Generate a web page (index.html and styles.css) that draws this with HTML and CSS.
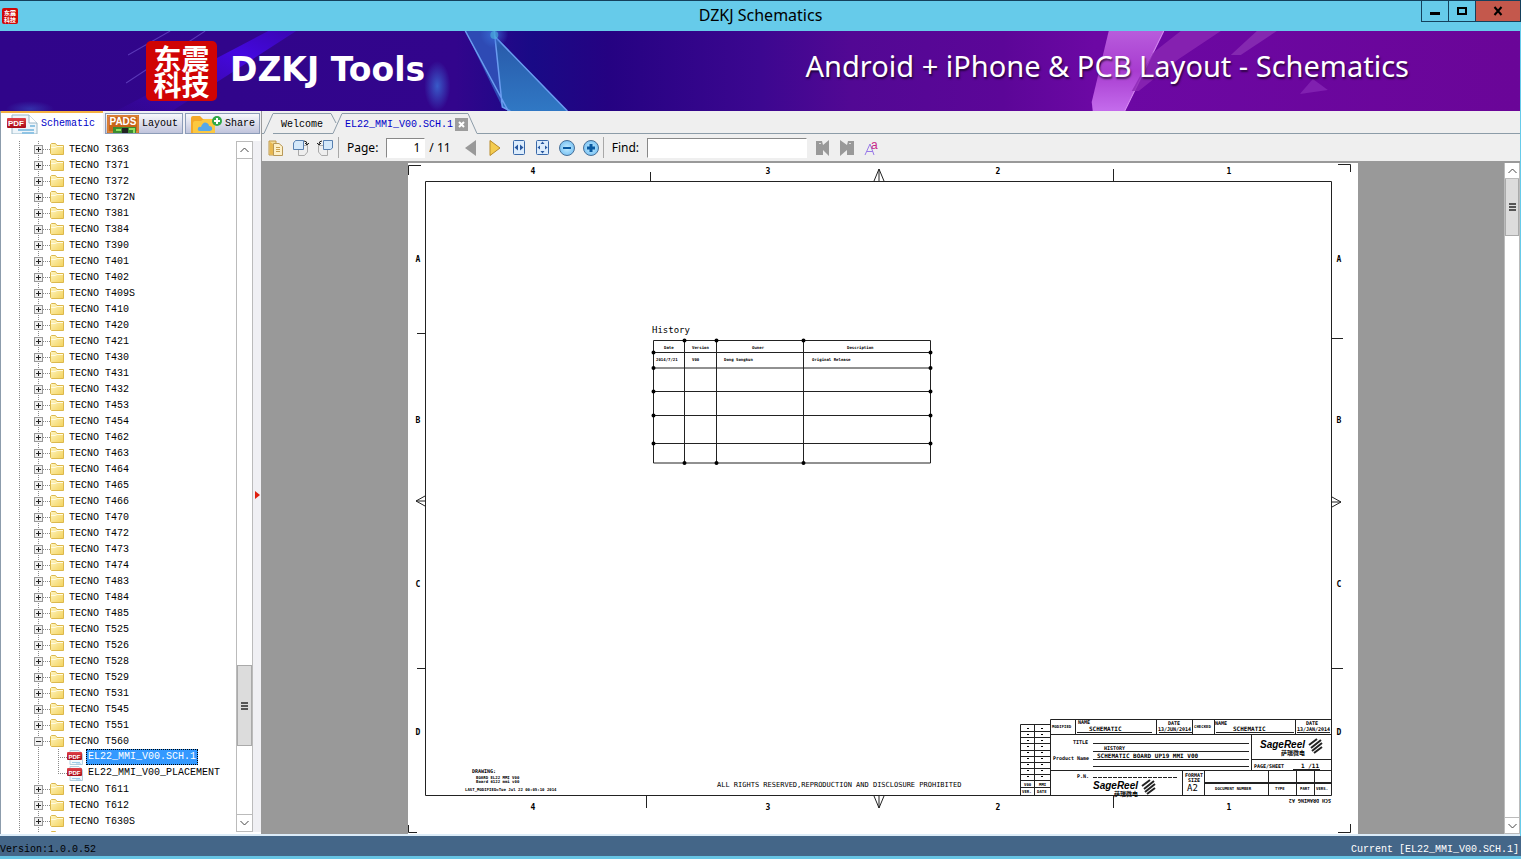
FILE: index.html
```html
<!DOCTYPE html>
<html lang="en">
<head>
    <meta charset="UTF-8">
    <meta name="viewport" content="width=device-width, initial-scale=1.0">
    <title>DZKJ Schematics</title>
    <link rel="stylesheet" href="styles.css">
</head>
<body>

    <!-- Shared icons -->
    <svg class="sprite" aria-hidden="true">
        <defs>
            <linearGradient id="folderFill" x1="0" y1="0" x2="1" y2="1">
                <stop offset="0" stop-color="#fff6c4"/>
                <stop offset="1" stop-color="#f3d25c"/>
            </linearGradient>
            <linearGradient id="pdfRed" x1="0" y1="0" x2="0" y2="1">
                <stop offset="0" stop-color="#e04048"/>
                <stop offset="1" stop-color="#a80c18"/>
            </linearGradient>
            <radialGradient id="zoomFill">
                <stop offset="0" stop-color="#c4ecff"/>
                <stop offset="1" stop-color="#7cc4f4"/>
            </radialGradient>
        </defs>
        <symbol id="folder" viewBox="0 0 14 12">
            <path d="M.5 10.500V1.500L1.500.5H5.500L7 2.500H13.500V11.500H1.500Z" fill="url(#folderFill)" stroke="#dcb84c"/>
            <path d="M1 4.500H5L7 3.500H13" stroke="#fffbe0" fill="none"/>
        </symbol>
        <symbol id="pdf" viewBox="0 0 16 15">
            <path d="M3 .5H12L15.500 4V14.500H3Z" fill="#f2f8fc" stroke="#b4cede"/>
            <path d="M5 12.500H13M9 14H14" stroke="#9ccbe8"/>
            <rect x="0" y="2" width="15" height="8" rx="1" fill="url(#pdfRed)"/>
            <text x="7.500" y="8.500" font-size="6" font-weight="bold" text-anchor="middle" fill="#fff">PDF</text>
        </symbol>
    </svg>

    <header class="titlebar">
        <span class="app-icon" lang="zh">东震<br>科技</span>
        <h1>DZKJ Schematics</h1>
        <div class="window-buttons">
            <button aria-label="Minimize"><svg width="12" height="12"><rect x="1" y="7" width="10" height="3"/></svg></button>
            <button aria-label="Maximize"><svg width="12" height="12"><path d="M2 3H10V9H2Z" fill="none" stroke="#000" stroke-width="2"/></svg></button>
            <button class="close" aria-label="Close"><svg width="12" height="12"><path d="M2.500 2L9.500 10M9.500 2L2.500 10" stroke="#000" stroke-width="2"/></svg></button>
        </div>
    </header>

    <section class="banner">
        <svg class="banner-art" viewBox="0 0 1519 80" preserveAspectRatio="none" aria-hidden="true">
            <defs>
                <linearGradient id="bannerFill">
                    <stop offset="0" stop-color="#30058a"/>
                    <stop offset=".3" stop-color="#32058c"/>
                    <stop offset=".35" stop-color="#190a86"/>
                    <stop offset=".4" stop-color="#250282"/>
                    <stop offset=".5" stop-color="#3c0790"/>
                    <stop offset=".56" stop-color="#520894"/>
                    <stop offset=".66" stop-color="#5c0698"/>
                    <stop offset=".72" stop-color="#6c08a4"/>
                    <stop offset="1" stop-color="#6a0598"/>
                </linearGradient>
                <linearGradient id="beam" x1="0" y1="1" x2="1" y2="0">
                    <stop offset="0" stop-color="#4008b8" stop-opacity=".1"/>
                    <stop offset=".7" stop-color="#4408e0"/>
                    <stop offset="1" stop-color="#3a06b0"/>
                </linearGradient>
                <linearGradient id="shardBlue" x1="0" y1="0" x2="0" y2="1">
                    <stop offset="0" stop-color="#2858a8"/>
                    <stop offset="1" stop-color="#3078c4"/>
                </linearGradient>
                <linearGradient id="shardPink" x1="0" y1="0" x2="0" y2="1">
                    <stop offset="0" stop-color="#b85cdc"/>
                    <stop offset=".5" stop-color="#a83cd0"/>
                    <stop offset="1" stop-color="#c46cec"/>
                </linearGradient>
                <radialGradient id="glow">
                    <stop offset="0" stop-color="#3a70d8" stop-opacity=".8"/>
                    <stop offset="1" stop-color="#3a70d8" stop-opacity="0"/>
                </radialGradient>
            </defs>
            <rect width="1519" height="80" fill="url(#bannerFill)"/>
            <path d="M268 0H296L172 80H116Z" fill="url(#beam)"/>
            <path d="M205 0L126 52M170 0L128 24" stroke="#5a38b8" stroke-width="1"/>
            <ellipse cx="437" cy="55" rx="13" ry="25" fill="url(#glow)"/>
            <ellipse cx="30" cy="78" rx="24" ry="8" fill="url(#glow)" opacity=".5"/>
            <path d="M465 0H494L502 76Z" fill="#2e4ab4"/>
            <path d="M494 4L567 80H508L502 76Z" fill="url(#shardBlue)"/>
            <path d="M465 0L508 80M494 0L502 76L510 80M494 5L567 80" stroke="#6a9cf0" stroke-width="1.500" fill="none"/>
            <circle cx="494" cy="3" r="14" fill="url(#glow)"/>
            <circle cx="494" cy="4" r="4" fill="#50c8e0" opacity=".5"/>
            <path d="M1108 0H1163L1124 80H1092L1091 71Z" fill="url(#shardPink)"/>
            <path d="M1163 0L1124 80" stroke="#d88cf4"/>
            <path d="M1180 0H1220L1178 28L1138 60H1131L1152 22Z" fill="#8c28b4" opacity=".8"/>
            <path d="M1256 0H1276L1240 24H1230Z" fill="#8428b0"/>
            <path d="M1312 48L1327 59L1299 63Z" fill="#8020b0"/>
        </svg>
        <div class="brand">
            <span class="brand-logo" lang="zh"><span>东震</span><span>科技</span></span>
            <span class="brand-name">DZKJ Tools</span>
        </div>
        <p class="slogan">Android + iPhone &amp; PCB Layout - Schematics</p>
    </section>

    <div class="workspace">
        <!-- Left panel -->
        <aside class="sidebar">
            <nav class="side-tabs">
                <button class="side-tab active">
                    <svg width="32" height="20" aria-hidden="true">
                        <path d="M6 1H23L31 9V20H6Z" fill="#eef5fa" stroke="#9ab8c8"/>
                        <path d="M23 1V9H31" fill="#fff" stroke="#9ab8c8"/>
                        <path d="M12 16H28M16 19H28M24 12H29" stroke="#90c4e4" stroke-width="2"/>
                        <rect x="1" y="4" width="19" height="10" rx="1" fill="url(#pdfRed)"/>
                        <text x="10" y="12" font-size="8" font-weight="bold" text-anchor="middle" fill="#fff">PDF</text>
                    </svg>
                    Schematic
                </button>
                <button class="side-tab">
                    <svg width="32" height="19" aria-hidden="true">
                        <rect x="0" y="1" width="32" height="18" fill="#c86418"/>
                        <rect x="1" y="2" width="30" height="16" fill="none" stroke="#e89850"/>
                        <rect x="6" y="13" width="23" height="6" fill="#3c8c30"/>
                        <path d="M9 16H14M22 15H27V19" stroke="#90e060" stroke-width="2" fill="none"/>
                        <rect x="15" y="14" width="6" height="5" fill="#222"/>
                        <text x="16" y="11" font-size="10" font-weight="bold" text-anchor="middle" fill="#fff">PADS</text>
                    </svg>
                    Layout
                </button>
                <button class="side-tab">
                    <svg width="32" height="19" aria-hidden="true">
                        <path d="M1 19V4Q1 2 3 2H10L13 5H25V19Z" fill="#f4a828"/>
                        <path d="M3 19V9Q3 7 5 7H11L14 5H25V19Z" fill="#fcc840"/>
                        <path d="M10 17Q7 17 8 14Q9 12 11 13Q13 7 17 9Q19 10 19 12Q23 12 22 16L20 17Z" fill="#58a8e8"/>
                        <circle cx="27" cy="7" r="5" fill="#30a848"/>
                        <path d="M24 7H30M27 4V10" stroke="#fff" stroke-width="2"/>
                    </svg>
                    Share
                </button>
            </nav>

            <div class="tree-panel">
                <ul class="tree">
                    <li><button aria-label="Expand"></button><svg><use href="#folder"/></svg>TECNO T363</li>
                    <li><button aria-label="Expand"></button><svg><use href="#folder"/></svg>TECNO T371</li>
                    <li><button aria-label="Expand"></button><svg><use href="#folder"/></svg>TECNO T372</li>
                    <li><button aria-label="Expand"></button><svg><use href="#folder"/></svg>TECNO T372N</li>
                    <li><button aria-label="Expand"></button><svg><use href="#folder"/></svg>TECNO T381</li>
                    <li><button aria-label="Expand"></button><svg><use href="#folder"/></svg>TECNO T384</li>
                    <li><button aria-label="Expand"></button><svg><use href="#folder"/></svg>TECNO T390</li>
                    <li><button aria-label="Expand"></button><svg><use href="#folder"/></svg>TECNO T401</li>
                    <li><button aria-label="Expand"></button><svg><use href="#folder"/></svg>TECNO T402</li>
                    <li><button aria-label="Expand"></button><svg><use href="#folder"/></svg>TECNO T409S</li>
                    <li><button aria-label="Expand"></button><svg><use href="#folder"/></svg>TECNO T410</li>
                    <li><button aria-label="Expand"></button><svg><use href="#folder"/></svg>TECNO T420</li>
                    <li><button aria-label="Expand"></button><svg><use href="#folder"/></svg>TECNO T421</li>
                    <li><button aria-label="Expand"></button><svg><use href="#folder"/></svg>TECNO T430</li>
                    <li><button aria-label="Expand"></button><svg><use href="#folder"/></svg>TECNO T431</li>
                    <li><button aria-label="Expand"></button><svg><use href="#folder"/></svg>TECNO T432</li>
                    <li><button aria-label="Expand"></button><svg><use href="#folder"/></svg>TECNO T453</li>
                    <li><button aria-label="Expand"></button><svg><use href="#folder"/></svg>TECNO T454</li>
                    <li><button aria-label="Expand"></button><svg><use href="#folder"/></svg>TECNO T462</li>
                    <li><button aria-label="Expand"></button><svg><use href="#folder"/></svg>TECNO T463</li>
                    <li><button aria-label="Expand"></button><svg><use href="#folder"/></svg>TECNO T464</li>
                    <li><button aria-label="Expand"></button><svg><use href="#folder"/></svg>TECNO T465</li>
                    <li><button aria-label="Expand"></button><svg><use href="#folder"/></svg>TECNO T466</li>
                    <li><button aria-label="Expand"></button><svg><use href="#folder"/></svg>TECNO T470</li>
                    <li><button aria-label="Expand"></button><svg><use href="#folder"/></svg>TECNO T472</li>
                    <li><button aria-label="Expand"></button><svg><use href="#folder"/></svg>TECNO T473</li>
                    <li><button aria-label="Expand"></button><svg><use href="#folder"/></svg>TECNO T474</li>
                    <li><button aria-label="Expand"></button><svg><use href="#folder"/></svg>TECNO T483</li>
                    <li><button aria-label="Expand"></button><svg><use href="#folder"/></svg>TECNO T484</li>
                    <li><button aria-label="Expand"></button><svg><use href="#folder"/></svg>TECNO T485</li>
                    <li><button aria-label="Expand"></button><svg><use href="#folder"/></svg>TECNO T525</li>
                    <li><button aria-label="Expand"></button><svg><use href="#folder"/></svg>TECNO T526</li>
                    <li><button aria-label="Expand"></button><svg><use href="#folder"/></svg>TECNO T528</li>
                    <li><button aria-label="Expand"></button><svg><use href="#folder"/></svg>TECNO T529</li>
                    <li><button aria-label="Expand"></button><svg><use href="#folder"/></svg>TECNO T531</li>
                    <li><button aria-label="Expand"></button><svg><use href="#folder"/></svg>TECNO T545</li>
                    <li><button aria-label="Expand"></button><svg><use href="#folder"/></svg>TECNO T551</li>
                    <li><button class="open" aria-label="Collapse"></button><svg><use href="#folder"/></svg>TECNO T560</li>
                    <li class="file"><svg><use href="#pdf"/></svg><a href="#sch" class="selected">EL22_MMI_V00.SCH.1</a></li>
                    <li class="file last"><svg><use href="#pdf"/></svg><a href="#placement">EL22_MMI_V00_PLACEMENT</a></li>
                    <li><button aria-label="Expand"></button><svg><use href="#folder"/></svg>TECNO T611</li>
                    <li><button aria-label="Expand"></button><svg><use href="#folder"/></svg>TECNO T612</li>
                    <li><button aria-label="Expand"></button><svg><use href="#folder"/></svg>TECNO T630S</li>
                    <li class="cut"><svg><use href="#folder"/></svg></li>
                </ul>
                <div class="scrollbar tree-scroll">
                    <button aria-label="Scroll up"><svg width="9" height="6"><path d="M.5 5L4.500 1L8.500 5"/></svg></button>
                    <div class="track"><div class="thumb"></div></div>
                    <button aria-label="Scroll down"><svg width="9" height="6"><path d="M.5 1L4.500 5L8.500 1"/></svg></button>
                </div>
                <button class="splitter" aria-label="Collapse panel"><svg width="5" height="8"><path d="M0 0L5 4L0 8Z" fill="#e02010"/></svg></button>
            </div>
        </aside>

        <!-- Document area -->
        <main class="content">
            <nav class="doc-tabs">
                <svg class="slant" width="11" height="23"><path d="M0 22.500H2L11 2.500"/></svg>
                <button class="doc-tab">Welcome</button>
                <svg class="slant" width="12" height="23"><path d="M0 2.500L5 12M0 22.500H2L11 2.500H12"/></svg>
                <button class="doc-tab active">EL22_MMI_V00.SCH.1</button>
                <button class="tab-close" aria-label="Close tab"><svg width="13" height="13"><rect width="13" height="13" fill="#9c9c9c"/><path d="M4 4L9 9M9 4L4 9" stroke="#fff" stroke-width="2"/></svg></button>
                <svg class="slant" width="9" height="23"><path d="M0 2.500L9 22.500"/></svg>
                <span class="tab-line"></span>
            </nav>

            <div class="toolbar">
                <button aria-label="Open"><svg width="16" height="16"><path d="M1 1H8V15H1Z" fill="#f4dc98" stroke="#c09848"/><path d="M5.500 3.500H11L14.500 6.500V15.500H5.500Z" fill="#fdf0c8" stroke="#b89858"/><path d="M8 7.500H12M8 9.500H12M8 11.500H12" stroke="#c8a050"/><path d="M2 2L5 4V15L2 14Z" fill="#e8b850"/></svg></button>
                <button aria-label="Rotate right"><svg width="17" height="17"><path d="M6.500 6.500H15.500V13L12.500 16.500H6.500Z" fill="#eee" stroke="#aaa"/><path d="M3.500 1.500H11.500V10.500H1.500V4Z" fill="#d4e8fa" stroke="#5880b0"/><path d="M12 2Q15 2 15 5M13 4L15 6L17 4" stroke="#222" fill="none"/></svg></button>
                <button aria-label="Rotate left"><svg width="17" height="17"><path d="M1.500 6.500H10.500V16.500H4.500L1.500 13Z" fill="#eee" stroke="#aaa"/><path d="M6.500 1.500H15.500V9L13.500 10.500H6.500Z" fill="#d4e8fa" stroke="#5880b0"/><path d="M5 2Q2 2 2 5M0 4L2 6L4 4" stroke="#222" fill="none"/></svg></button>
                <span class="separator"></span>
                <label for="page">Page:</label>
                <input id="page" class="page-input" type="text" value="1">
                <span class="total">/ 11</span>
                <button aria-label="Previous page"><svg width="12" height="18"><path d="M11 1V17L0 9Z" fill="#999"/></svg></button>
                <button aria-label="Next page"><svg width="14" height="18"><path d="M2 1.500V16.500L12 9Z" fill="#f4cc50" stroke="#b88a28"/></svg></button>
                <button aria-label="Fit width"><svg width="14" height="16"><rect x="1.500" y=".5" width="11" height="14" rx="1" fill="#dcecfc" stroke="#3868a8"/><path d="M6 4.500V10.500L2.500 7.500ZM8 4.500V10.500L11.500 7.500Z" fill="#2858a0"/></svg></button>
                <button aria-label="Fit page"><svg width="14" height="16"><rect x=".5" y=".5" width="12" height="14" rx="1" fill="#dcecfc" stroke="#3868a8"/><path d="M6.500 1.500L8.500 4H4.500ZM6.500 13.500L8.500 11H4.500ZM1.500 7.500L4 5.500V9.500ZM11.500 7.500L9 5.500V9.500Z" fill="#2858a0"/></svg></button>
                <button aria-label="Zoom out"><svg width="16" height="16"><circle cx="8" cy="8" r="7.500" fill="url(#zoomFill)" stroke="#487098"/><path d="M4 8H12" stroke="#0858a0" stroke-width="2"/></svg></button>
                <button aria-label="Zoom in"><svg width="16" height="16"><circle cx="8" cy="8" r="7.500" fill="url(#zoomFill)" stroke="#487098"/><path d="M4 8H12M8 4V12" stroke="#0858a0" stroke-width="3"/></svg></button>
                <span class="separator"></span>
                <label for="find">Find:</label>
                <input id="find" class="find-input" type="text">
                <button aria-label="Find previous"><svg width="16" height="16"><path d="M1 1H7L8 5L14 0V16L8 10V15H1Z" fill="#999"/><path d="M4 3H6V4H4Z" fill="#ddd"/></svg></button>
                <button aria-label="Find next"><svg width="16" height="16"><path d="M15 1H9L8 5L1 0V16L8 10V15H15Z" fill="#999"/><path d="M10 3H12V4H10Z" fill="#ddd"/></svg></button>
                <button aria-label="Match case"><svg width="18" height="20"><path d="M2 17L7 6L11 17M4 13.500H10" stroke="#9878e8" fill="none"/><text x="8" y="11" font-size="12" fill="#c82888">a</text></svg></button>
            </div>

            <div class="viewer">
                <div class="canvas">
                    <svg class="sheet" viewBox="408 163 950 671">
                        <rect x="408" y="163" width="950" height="671" fill="#fff"/>

                        <!-- Frame and zone marks -->
                        <g class="thin">
                            <path d="M425.500 181.500H1331.500V795.500H425.500Z"/>
                            <path d="M650.500 172V181M1113.500 169V181M646.500 796V808M1113.500 796V808"/>
                            <path d="M417 333.500H425M417 668.500H425M1332 338.500H1343M1332 668.500H1343"/>
                            <path d="M874 181L879 169L884 181M879 169V181M874 796L879 808L884 796M879 808V796"/>
                            <path d="M425 496L416 501L425 506M416 501H425M1332 497L1341 502L1332 507M1341 502H1332"/>
                            <path d="M421 165.500H408.500V175M1338 164.500H1350.500V172M1338 832.500H1350.500V824M417 832.500H408.500V825"/>
                        </g>
                        <g class="zone">
                            <text x="533" y="174">4</text><text x="768" y="174">3</text><text x="998" y="174">2</text><text x="1229" y="174">1</text>
                            <text x="533" y="810">4</text><text x="768" y="810">3</text><text x="998" y="810">2</text><text x="1229" y="810">1</text>
                            <text x="418" y="262">A</text><text x="418" y="423">B</text><text x="418" y="587">C</text><text x="418" y="735">D</text>
                            <text x="1339" y="262">A</text><text x="1339" y="423">B</text><text x="1339" y="587">C</text><text x="1339" y="735">D</text>
                        </g>

                        <!-- History table -->
                        <text x="652" y="333" class="t9">History</text>
                        <g class="thin">
                            <path d="M653.500 340.500H930.500V463H653.500Z"/>
                            <path d="M653 352.500H931M653 368H931M653 391.500H931M653 415.500H931M653 443.500H931"/>
                            <path d="M684.500 340V463M716.500 340V463M803.500 340V463"/>
                        </g>
                        <path class="dots" d="M684.500 340.500h0M716.500 340.500h0M803.500 340.500h0M684.500 463h0M716.500 463h0M803.500 463h0M653.500 352.500h0M653.500 368h0M653.500 391.500h0M653.500 415.500h0M653.500 443.500h0M930.500 352.500h0M930.500 368h0M930.500 391.500h0M930.500 415.500h0M930.500 443.500h0"/>
                        <g class="t4">
                            <text x="664" y="349">Date</text><text x="692" y="349">Version</text><text x="752" y="349">Owner</text><text x="847" y="349">Description</text>
                            <text x="656" y="361">2014/7/21</text><text x="692" y="361">V00</text><text x="724" y="361">Dong Songkun</text><text x="812" y="361">Original Release</text>
                        </g>

                        <!-- Notes -->
                        <text x="472" y="773" class="t5">DRAWING:</text>
                        <g class="t4">
                            <text x="476" y="779">BOARD EL22 MMI V00</text>
                            <text x="476" y="783">Board 6122 mmi v00</text>
                            <text x="465" y="791">LAST_MODIFIED=Tue Jul 22 00:05:10 2014</text>
                        </g>
                        <text x="717" y="787" class="t7">ALL RIGHTS RESERVED,REPRODUCTION AND DISCLOSURE PROHIBITED</text>

                        <!-- Revision column -->
                        <g class="thin">
                            <path d="M1050 724.500H1020.500V795M1034.500 724V795"/>
                            <path d="M1020 731.500H1050M1020 737.500H1050M1020 743.500H1050M1020 750.500H1050M1020 756.500H1050M1020 762.500H1050M1020 768.500H1050M1020 774.500H1050M1020 780.500H1050M1020 787.500H1050"/>
                        </g>
                        <path class="specks" d="M1028 728V780M1042 728V780"/>
                        <g class="t4">
                            <text x="1024" y="786">V00</text><text x="1039" y="786">MMI</text>
                            <text x="1022" y="793">VER.</text><text x="1037" y="793">DATE</text>
                        </g>

                        <!-- Title block -->
                        <g class="thin">
                            <path d="M1050.500 795V719.500H1331M1050 734.500H1331M1050 770.500H1331M1251 759.500H1331M1251.500 734V770"/>
                            <path d="M1075.500 719V734M1156.500 719V734M1192.500 719V734M1214.500 719V734M1295.500 719V734"/>
                            <path d="M1182.500 770V795M1204.500 770V795M1268.500 770V795M1296.500 770V795M1314.500 770V795"/>
                            <path d="M1077 732.500H1152M1159 732.500H1192M1216 732.500H1294M1297 732.500H1330"/>
                            <path d="M1093 743.500H1249M1093 751.500H1249M1093 759.500H1249M1093 766.500H1249M1293 769.500H1320"/>
                            <path d="M1093 777.500H1177" stroke-dasharray="4 1"/>
                            <path d="M1204 783H1331" stroke-width="2"/>
                        </g>
                        <g class="t5">
                            <text x="1052" y="728" class="t4">MODIFIED</text><text x="1078" y="724">NAME</text><text x="1168" y="725">DATE</text>
                            <text x="1194" y="728" class="t4">CHECKED</text><text x="1215" y="725">NAME</text><text x="1306" y="725">DATE</text>
                            <text x="1158" y="731">13/JUN/2014</text><text x="1297" y="731">13/JAN/2014</text>
                            <text x="1073" y="744">TITLE</text><text x="1104" y="750">HISTORY</text><text x="1053" y="760">Product Name</text>
                            <text x="1077" y="778">P.N.</text><text x="1254" y="768">PAGE/SHEET</text><text x="1301" y="768" class="t6">1 /11</text>
                            <text x="1185" y="777">FORMAT</text><text x="1188" y="782">SIZE</text>
                            <text x="1215" y="790" class="t4">DOCUMENT NUMBER</text><text x="1275" y="790" class="t4">TYPE</text><text x="1300" y="790" class="t4">PART</text><text x="1316" y="790" class="t4">VERS.</text>
                            <text x="1331" y="799" transform="rotate(180 1331 799)">SCH DRAWING A2</text>
                        </g>
                        <text x="1089" y="731" class="t6">SCHEMATIC</text>
                        <text x="1233" y="731" class="t6">SCHEMATIC</text>
                        <text x="1097" y="758" class="t6">SCHEMATIC BOARD UP19 MMI V00</text>
                        <text x="1187" y="791" class="t9">A2</text>

                        <!-- SageReel marks -->
                        <g id="sage">
                            <text x="1260" y="748" class="sage">SageReel</text>
                            <text x="1281" y="755" class="sage-cn" lang="zh">萨瑞微电</text>
                            <path class="swoosh" d="M1309 745L1317 739M1311 748L1321 740M1312 751L1322 743M1314 753L1322 747"/>
                        </g>
                        <use href="#sage" x="-167" y="41"/>
                    </svg>
                </div>
                <div class="scrollbar view-scroll">
                    <button aria-label="Scroll up"><svg width="9" height="6"><path d="M.5 5L4.500 1L8.500 5"/></svg></button>
                    <div class="track"><div class="thumb"></div></div>
                    <button aria-label="Scroll down"><svg width="9" height="6"><path d="M.5 1L4.500 5L8.500 1"/></svg></button>
                </div>
            </div>
        </main>
    </div>

    <footer class="statusbar">
        <span>Version:1.0.0.52</span>
        <span class="current">Current [EL22_MMI_V00.SCH.1]</span>
    </footer>

</body>
</html>
```
FILE: styles.css
```css
* {
    box-sizing: border-box;
}

body {
    margin: 0;
    height: 100vh;
    display: flex;
    flex-direction: column;
    overflow: hidden;
    background-color: #66cbea;
    font-family: "Liberation Mono", monospace;
    font-size: 10px;
    color: #000;
}

button {
    margin: 0;
    padding: 0;
    border: none;
    background: none;
    font: inherit;
    color: inherit;
    display: flex;
    align-items: center;
    justify-content: center;
}

svg {
    display: block;
    flex: none;
}

svg text {
    font-family: "Liberation Sans", sans-serif;
}

.sprite {
    position: absolute;
    width: 0;
    height: 0;
}

/* Title bar */
.titlebar {
    flex: none;
    height: 31px;
    display: grid;
    grid-template-columns: 1fr auto 1fr;
    border-top: 1px solid #14405c;
}

.titlebar h1 {
    margin: 0;
    font: 16px/29px "Noto Sans", sans-serif;
}

.app-icon {
    align-self: center;
    width: 16px;
    height: 16px;
    margin-left: 2px;
    padding-top: 1px;
    border-radius: 2px;
    background-color: #d00808;
    color: #fff;
    font: bold 6px/7px "Noto Sans CJK SC", sans-serif;
    text-align: center;
}

.window-buttons {
    justify-self: end;
    display: flex;
    height: 21px;
    border: 1px solid #14405c;
    border-top: none;
}

.window-buttons button {
    width: 27px;
    border-right: 1px solid #14405c;
}

.window-buttons .close {
    width: 44px;
    border-right: none;
    background-color: #c4584c;
}

/* Banner */
.banner {
    position: relative;
    flex: none;
    height: 80px;
    margin-right: 1px;
    display: flex;
    align-items: center;
    justify-content: space-between;
    padding: 0 111px 0 146px;
    color: #fff;
}

.banner-art {
    position: absolute;
    inset: 0;
    width: 100%;
    height: 100%;
}

.brand {
    position: relative;
    display: flex;
    align-items: center;
    gap: 13px;
}

.brand-logo {
    width: 71px;
    height: 60px;
    display: flex;
    flex-direction: column;
    align-items: center;
    justify-content: center;
    border-radius: 5px;
    background-color: #d00404;
    font: bold 28px/26px "Noto Sans CJK SC", sans-serif;
}

.brand-name {
    padding-bottom: 3px;
    font: bold 33px/48px "DejaVu Sans", sans-serif;
}

.slogan {
    position: relative;
    margin: 0 0 10px;
    font: 29px/40px "Noto Sans", sans-serif;
    text-shadow: 1px 2px 2px rgba(0, 0, 0, 0.6);
}

/* Workspace */
.workspace {
    flex: 1;
    min-height: 0;
    display: flex;
    margin-right: 1px;
    background-color: #efefef;
    border-bottom: 2px solid #dcecf8;
}

.sidebar {
    flex: none;
    width: 262px;
    display: flex;
    flex-direction: column;
    border-left: 1px solid #8c9cac;
    border-right: 1px solid #999;
    background-color: #f0f0f4;
}

.side-tabs {
    flex: none;
    height: 23px;
    display: flex;
    align-items: flex-end;
    gap: 2px;
}

.side-tab {
    height: 21px;
    gap: 3px;
    padding: 0 4px 0 1px;
    border: 1px solid #8c9cb8;
    background: linear-gradient(#f8f8fc, #c0c4dc);
}

.side-tab:last-child {
    padding-left: 4px;
}

.side-tab.active {
    height: 23px;
    padding: 0 8px 0 5px;
    border: none;
    border-top: 2px solid #f4b040;
    background: #fff;
    color: #0000c8;
}

.tree-panel {
    flex: 1;
    min-height: 0;
    display: flex;
    background-color: #fff;
    padding: 7px 0 2px;
}

.tree {
    flex: 1;
    margin: 0;
    padding: 0 0 0 18px;
    list-style: none;
    overflow: hidden;
    background: repeating-linear-gradient(#888 0 1px, transparent 1px 2px) 18px 0 / 1px 100% no-repeat,
        repeating-linear-gradient(#888 0 1px, transparent 1px 2px) 37px 0 / 1px 100% no-repeat;
}

/* Each row carries the dotted connector that runs into its icon */
.tree li {
    height: 16px;
    display: flex;
    align-items: center;
    padding-left: 15px;
    white-space: nowrap;
    background: repeating-linear-gradient(90deg, #888 0 1px, transparent 1px 2px) 20px 8px / 12px 1px no-repeat;
}

.tree li button {
    width: 9px;
    height: 9px;
    margin-right: 7px;
    border: 1px solid #999;
    background: linear-gradient(#222, #222) center / 5px 1px no-repeat,
        linear-gradient(#222, #222) center / 1px 5px no-repeat,
        #f0f0f0;
}

.tree li .open {
    background: linear-gradient(#222, #222) center / 5px 1px no-repeat, #f0f0f0;
}

.tree li svg {
    width: 14px;
    height: 12px;
    margin-right: 5px;
}

.tree .cut {
    padding-left: 31px;
}

.tree .file {
    padding-left: 48px;
    background: repeating-linear-gradient(90deg, #888 0 1px, transparent 1px 2px) 39px 8px / 10px 1px no-repeat,
        repeating-linear-gradient(#888 0 1px, transparent 1px 2px) 39px 0 / 1px 16px no-repeat;
}

.tree .last {
    background-size: 10px 1px, 1px 8px;
}

.tree .file svg {
    width: 16px;
    height: 15px;
    margin-right: 3px;
}

.tree .file a {
    padding: 0 1px;
    line-height: 14px;
    border: 1px solid transparent;
    color: #000;
    text-decoration: none;
}

.tree .file .selected {
    border: 1px dotted #000;
    background-color: #3399ff;
    color: #fff;
}

.splitter {
    width: 8px;
    padding-top: 16px;
    background-color: #f0f0f4;
}

/* Scrollbars */
.scrollbar {
    flex: none;
    display: flex;
    flex-direction: column;
    border: 1px solid #bbb;
    background-color: #fff;
}

.scrollbar path {
    fill: none;
    stroke: #444;
}

.scrollbar button {
    height: 16px;
}

.track {
    flex: 1;
    border-top: 1px solid #bbb;
    border-bottom: 1px solid #bbb;
    display: flex;
    flex-direction: column;
}

.thumb {
    border: 1px solid #aaa;
    background-color: #dcdcdc;
    display: flex;
    align-items: center;
    justify-content: center;
}

.thumb::after {
    content: "";
    width: 7px;
    height: 8px;
    background: repeating-linear-gradient(#555 0 2px, transparent 2px 3px);
}

.tree-scroll {
    width: 17px;
}

.tree-scroll .track {
    justify-content: flex-end;
    padding-bottom: 68px;
}

.tree-scroll .thumb {
    height: 81px;
}

.view-scroll {
    width: 16px;
    border-top: none;
}

.view-scroll button {
    height: 15px;
}

.view-scroll .thumb {
    height: 57px;
    border-top: none;
}

/* Document tabs */
.content {
    flex: 1;
    min-width: 0;
    display: flex;
    flex-direction: column;
}

.doc-tabs {
    flex: none;
    height: 23px;
    display: flex;
    align-items: flex-end;
}

.slant path {
    fill: none;
    stroke: #8c9ca8;
}

.doc-tab {
    height: 21px;
    padding: 2px 8px 0;
    border-top: 1px solid #8c9ca8;
    border-bottom: 1px solid #8c9ca8;
}

.doc-tab.active {
    padding: 2px 2px 0;
    border-bottom-color: transparent;
    color: #0000c8;
}

.tab-close {
    height: 21px;
    border-top: 1px solid #8c9ca8;
}

.tab-line {
    flex: 1;
    border-bottom: 1px solid #8c9ca8;
}

/* Toolbar */
.toolbar {
    flex: none;
    height: 29px;
    display: flex;
    align-items: center;
    gap: 8px;
    padding: 0 6px;
    border-bottom: 2px solid #999;
    font: 12px/20px "Noto Sans", sans-serif;
}

.toolbar button {
    min-width: 16px;
}

.separator {
    width: 1px;
    height: 21px;
    margin-left: -4px;
    background-color: #a8a8a8;
}

.toolbar input {
    height: 20px;
    padding: 0 4px;
    border: 1px solid #fff;
    border-top-color: #888;
    border-left-color: #888;
    background-color: #fff;
    font: inherit;
}

.toolbar .page-input {
    width: 39px;
    text-align: right;
}

.total {
    margin: 0 4px 0 -4px;
}

.find-input {
    width: 160px;
}

/* Viewer */
.viewer {
    flex: 1;
    min-height: 0;
    display: flex;
}

.canvas {
    flex: 1;
    min-width: 0;
    display: flex;
    justify-content: center;
    background-color: #999;
}

.sheet {
    height: 100%;
}

.sheet text {
    font-family: "DejaVu Sans Mono", monospace;
}

.thin {
    fill: none;
    stroke: #222;
}

.dots {
    stroke: #000;
    stroke-width: 4;
    stroke-linecap: round;
}

.specks {
    stroke: #000;
    stroke-width: 2;
    stroke-dasharray: 1 5;
}

.zone {
    font-size: 8px;
    font-weight: bold;
    text-anchor: middle;
}

.t4 {
    font-size: 4px;
    font-weight: bold;
}

.t5 {
    font-size: 5px;
    font-weight: bold;
}

.t6 {
    font-size: 6px;
    font-weight: bold;
}

.t7 {
    font-size: 7px;
}

.t9 {
    font-size: 9px;
}

.sheet .sage {
    font: italic bold 10px "Liberation Sans", sans-serif;
}

.sheet .sage-cn {
    font: bold 6px "Noto Sans CJK SC", sans-serif;
}

.swoosh {
    fill: none;
    stroke: #222;
    stroke-width: 2;
}

/* Status bar */
.statusbar {
    flex: none;
    height: 23px;
    display: flex;
    align-items: center;
    justify-content: space-between;
    padding: 6px 2px 0 0;
    border-bottom: 3px solid #66c4e4;
    background-color: #446688;
}

.current {
    color: #fff;
}
```
